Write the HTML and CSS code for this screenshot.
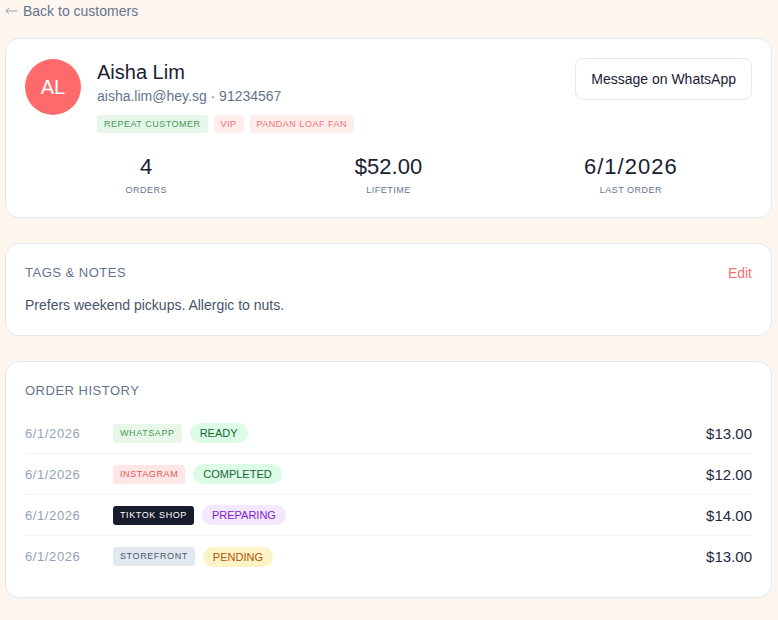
FILE: index.html
```html
<!DOCTYPE html>
<html lang="en">
<head>
    <meta charset="UTF-8">
    <meta name="viewport" content="width=device-width, initial-scale=1.0">
    <title>Customer - Aisha Lim</title>
    <link rel="stylesheet" href="styles.css">
</head>
<body>
    <div class="page">
        <a class="back" href="#">
            <svg class="arrow" width="13" height="8" viewBox="0 0 13 8" fill="none" stroke="currentColor" stroke-width="1"><path d="M12.5 4H1M4 1L1 4l3 3"/></svg>
            Back to customers
        </a>

        <!-- Profile card -->
        <section class="card profile">
            <div class="profile-top">
                <div class="avatar">AL</div>
                <div class="who">
                    <h1 class="name">Aisha Lim</h1>
                    <div class="contact">aisha.lim@hey.sg · 91234567</div>
                    <div class="tags">
                        <span class="tag tag-green">Repeat customer</span>
                        <span class="tag tag-red">VIP</span>
                        <span class="tag tag-red">Pandan loaf fan</span>
                    </div>
                </div>
                <button class="btn">Message on WhatsApp</button>
            </div>
            <div class="stats">
                <div class="stat">
                    <div class="stat-value">4</div>
                    <div class="stat-label">Orders</div>
                </div>
                <div class="stat">
                    <div class="stat-value">$52.00</div>
                    <div class="stat-label">Lifetime</div>
                </div>
                <div class="stat">
                    <div class="stat-value spaced">6/1/2026</div>
                    <div class="stat-label">Last order</div>
                </div>
            </div>
        </section>

        <!-- Notes -->
        <section class="card notes-card">
            <div class="card-head">
                <h2 class="card-title">Tags &amp; Notes</h2>
                <a class="edit" href="#">Edit</a>
            </div>
            <p class="notes">Prefers weekend pickups. Allergic to nuts.</p>
        </section>

        <!-- Orders -->
        <section class="card orders-card">
            <h2 class="card-title">Order history</h2>
            <ul class="orders">
                <li class="order">
                    <span class="date">6/1/2026</span>
                    <span class="channel ch-whatsapp">WhatsApp</span>
                    <span class="status st-ready">Ready</span>
                    <span class="amount">$13.00</span>
                </li>
                <li class="order">
                    <span class="date">6/1/2026</span>
                    <span class="channel ch-instagram">Instagram</span>
                    <span class="status st-completed">Completed</span>
                    <span class="amount">$12.00</span>
                </li>
                <li class="order">
                    <span class="date">6/1/2026</span>
                    <span class="channel ch-tiktok">TikTok Shop</span>
                    <span class="status st-preparing">Preparing</span>
                    <span class="amount">$14.00</span>
                </li>
                <li class="order">
                    <span class="date">6/1/2026</span>
                    <span class="channel ch-store">Storefront</span>
                    <span class="status st-pending">Pending</span>
                    <span class="amount">$13.00</span>
                </li>
            </ul>
        </section>
    </div>
</body>
</html>
```

FILE: styles.css
```css
* {
    box-sizing: border-box;
}
body {
    margin: 0;
    background: #fdf6ef;
    font-family: "Liberation Sans", Arial, sans-serif;
    color: #1a2033;
}
.page {
    padding: 2px 6px 20px 5px;
}
.back {
    display: flex;
    align-items: center;
    gap: 5px;
    font-size: 14px;
    line-height: 18px;
    color: #64748b;
    text-decoration: none;
}
.arrow {
    color: #94a3b8;
}

.card {
    background: #fff;
    border: 1px solid #e2e8f0;
    border-radius: 14px;
    padding: 19px 19px;
    margin-top: 18px;
    margin-bottom: 25px;
}
.card + .card {
    margin-top: 0;
}

/* profile */
.profile {
    padding-bottom: 20px;
}
.profile-top {
    display: flex;
    align-items: flex-start;
    gap: 16px;
}
.avatar {
    width: 56px;
    height: 56px;
    border-radius: 50%;
    background: #ff6b6b;
    color: #fff;
    font-size: 20px;
    display: flex;
    align-items: center;
    justify-content: center;
    flex-shrink: 0;
    margin-top: 1px;
}
.who {
    flex: 1;
}
.name {
    margin: 1px 0 0;
    font-size: 20px;
    font-weight: 400;
    line-height: 26px;
}
.contact {
    margin-top: 2px;
    font-size: 14px;
    color: #64748b;
    line-height: 18px;
}
.tags {
    display: flex;
    gap: 6px;
    margin-top: 10px;
}
.tag {
    font-size: 9px;
    text-transform: uppercase;
    letter-spacing: 0.5px;
    padding: 0 7px;
    line-height: 18px;
    border-radius: 3px;
}
.tag-green {
    background: #e6f6e9;
    color: #3f9a55;
}
.tag-red {
    background: #ffecec;
    color: #f27070;
}
.btn {
    font-family: inherit;
    font-size: 14px;
    color: #1a2033;
    background: #fff;
    border: 1px solid #e2e8f0;
    border-radius: 8px;
    padding: 0 15px;
    height: 42px;
}

.stats {
    display: grid;
    grid-template-columns: repeat(3, 1fr);
    margin-top: 20px;
    text-align: center;
}
.stat-value {
    font-size: 22px;
    line-height: 28px;
}
.spaced {
    letter-spacing: 1px;
}
.stat-label {
    font-size: 9px;
    text-transform: uppercase;
    letter-spacing: 0.5px;
    color: #64748b;
    margin-top: 2px;
    line-height: 14px;
}

/* notes */
.notes-card {
    padding-bottom: 21px;
}
.card-head {
    display: flex;
    justify-content: space-between;
    align-items: center;
}
.card-title {
    margin: 0;
    font-size: 13px;
    font-weight: 400;
    text-transform: uppercase;
    letter-spacing: 0.5px;
    color: #64748b;
    line-height: 20px;
}
.edit {
    color: #f87171;
    text-decoration: none;
    font-size: 14px;
}
.notes {
    margin: 13px 0 0;
    font-size: 14px;
    color: #475569;
    line-height: 18px;
}

/* orders */
.orders-card {
    padding-bottom: 20px;
}
.orders {
    list-style: none;
    margin: 12px 0 0;
    padding: 0;
}
.order {
    display: flex;
    align-items: center;
    height: 41px;
    border-bottom: 1px solid #eef1f5;
}
.order:last-child {
    border-bottom: none;
}
.date {
    width: 88px;
    font-size: 13px;
    letter-spacing: 0.6px;
    color: #94a3b8;
}
.channel {
    font-size: 9px;
    text-transform: uppercase;
    letter-spacing: 0.6px;
    padding: 0 7px;
    line-height: 19px;
    border-radius: 3px;
    margin-right: 8px;
}
.ch-whatsapp {
    background: #e8f7ea;
    color: #3f9a55;
}
.ch-instagram {
    background: #ffe6e6;
    color: #e25555;
}
.ch-tiktok {
    background: #161b2e;
    color: #fff;
}
.ch-store {
    background: #e2e8f0;
    color: #475569;
}
.status {
    font-size: 11px;
    text-transform: uppercase;
    padding: 0 10px;
    line-height: 20px;
    border-radius: 10px;
}
.st-ready,
.st-completed {
    background: #dcfce7;
    color: #166534;
}
.st-preparing {
    background: #f3e8ff;
    color: #7e22ce;
}
.st-pending {
    background: #fef3c7;
    color: #b45309;
}
.amount {
    margin-left: auto;
    font-size: 15px;
    color: #1e293b;
}
```
